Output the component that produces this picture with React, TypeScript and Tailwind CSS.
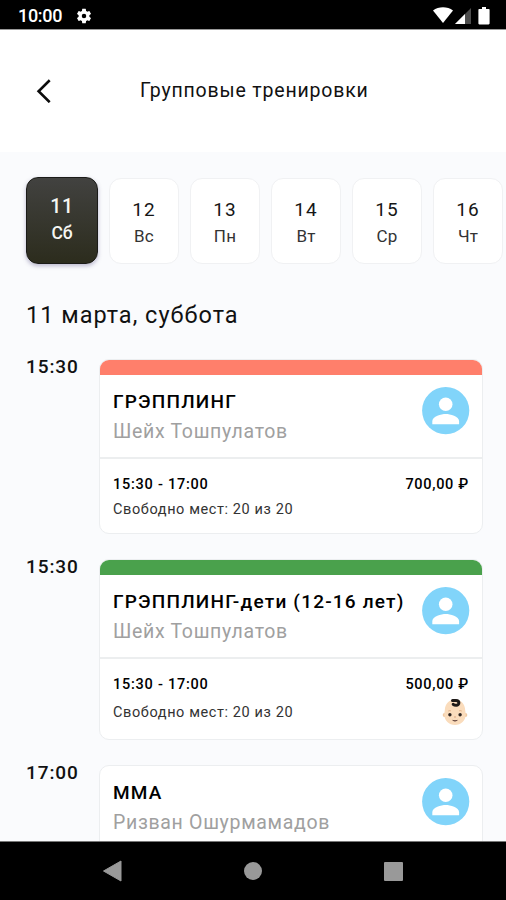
type Day = { date: number; name: string };

type Training = {
  start: string;
  title: string;
  coach: string;
  bar?: string;
  details?: { time: string; seats: string; price: string };
  kids?: boolean;
};

const days: Day[] = [
  { date: 12, name: "Вс" },
  { date: 13, name: "Пн" },
  { date: 14, name: "Вт" },
  { date: 15, name: "Ср" },
  { date: 16, name: "Чт" },
];

const trainings: Training[] = [
  {
    start: "15:30",
    title: "ГРЭППЛИНГ",
    coach: "Шейх Тошпулатов",
    bar: "bg-[#ff7f6b]",
    details: { time: "15:30 - 17:00", seats: "Свободно мест: 20 из 20", price: "700,00 ₽" },
  },
  {
    start: "15:30",
    title: "ГРЭППЛИНГ-дети (12-16 лет)",
    coach: "Шейх Тошпулатов",
    bar: "bg-[#4aa14c]",
    details: { time: "15:30 - 17:00", seats: "Свободно мест: 20 из 20", price: "500,00 ₽" },
    kids: true,
  },
  {
    start: "17:00",
    title: "ММА",
    coach: "Ризван Ошурмамадов",
  },
];

function StatusBar() {
  return (
    <div className="flex h-[29px] shrink-0 items-center bg-black pt-[3px] pr-[16px] pl-[18px] text-white">
      <span className="w-[57px] text-[18px] leading-none font-medium tracking-[-0.3px]">
        10:00
      </span>
      <svg className="size-[18px]" viewBox="0 0 24 24" fill="currentColor">
        <path d="M19.14 12.94c.04-.3.06-.61.06-.94 0-.32-.02-.64-.07-.94l2.03-1.58a.49.49 0 0 0 .12-.61l-1.92-3.32a.49.49 0 0 0-.59-.22l-2.39.96c-.5-.38-1.03-.7-1.62-.94l-.36-2.54a.48.48 0 0 0-.48-.41h-3.84c-.24 0-.43.17-.47.41l-.36 2.54c-.59.24-1.13.57-1.62.94l-2.39-.96a.48.48 0 0 0-.59.22L2.74 8.87c-.12.21-.08.47.12.61l2.03 1.58c-.05.3-.09.63-.09.94s.02.64.07.94l-2.03 1.58a.49.49 0 0 0-.12.61l1.92 3.32c.12.22.37.29.59.22l2.39-.96c.5.38 1.03.7 1.62.94l.36 2.54c.05.24.24.41.48.41h3.84c.24 0 .44-.17.47-.41l.36-2.54c.59-.24 1.13-.56 1.62-.94l2.39.96c.22.08.47 0 .59-.22l1.92-3.32a.48.48 0 0 0-.12-.61zM12 15a3 3 0 1 1 0-6 3 3 0 0 1 0 6z" />
      </svg>
      <div className="ml-auto flex items-center">
        <svg className="h-[18px] w-[20px]" viewBox="0 0 20 18" fill="currentColor">
          <path d="M0 3.400C2.900 1.500 6.300.3 10 .3s7.100 1.200 10 3.100L10 16z" />
        </svg>
        <svg className="ml-[2px] h-[18px] w-[16px]" viewBox="0 0 16 18">
          <path d="M16 1v16H0z" fill="#4d4d4d" />
          <path d="M10 7v10H0z" fill="currentColor" />
        </svg>
        <svg className="ml-[7px] h-[18px] w-[12px]" viewBox="0 0 12 18" fill="currentColor">
          <path d="M4 0h4v2h2.600c.7 0 1 .4 1 1v13.300c0 .7-.4 1.200-1 1.200H1.400c-.7 0-1-.5-1-1.200V3c0-.6.4-1 1-1H4z" />
        </svg>
      </div>
    </div>
  );
}

function Header() {
  return (
    <header className="flex h-[123px] shrink-0 items-center border-t border-[#999] bg-white pl-[36px]">
      <svg className="h-[24px] w-[15px]" viewBox="0 0 15 24" fill="none">
        <path d="M13.700 1.300L2.600 12.200l11.100 11" stroke="#0c0c0c" strokeWidth="2.600" />
      </svg>
      <h1 className="ml-[89px] text-[19.5px] leading-[24px] tracking-[0.82px] whitespace-nowrap text-[#111]">
        Групповые тренировки
      </h1>
    </header>
  );
}

function DayPicker() {
  return (
    <div className="flex items-center gap-[11px] pt-[25px] pl-[26px] leading-none">
      <div className="flex h-[87px] w-[72px] shrink-0 flex-col items-center rounded-[12px] border border-[#1b1b18] bg-linear-to-b from-[#424240] to-[#2c2c1d] pt-[19px] text-[#f6f6f2] shadow-[0_2px_4px_rgba(70,60,120,0.35)]">
        <span className="text-[19.5px] font-medium tracking-[0.6px]">11</span>
        <span className="mt-[8px] text-[17.5px] font-medium tracking-[-0.1px]">Сб</span>
      </div>
      {days.map((day) => (
        <div
          key={day.date}
          className="flex h-[86px] w-[70px] shrink-0 flex-col items-center rounded-[12px] border border-[#f0f1f3] bg-white pt-[21px] text-[#161616]"
        >
          <span className="text-[19px] tracking-[1px]">{day.date}</span>
          <span className="mt-[9px] text-[17px] tracking-[0.2px] text-[#333]">{day.name}</span>
        </div>
      ))}
    </div>
  );
}

function Avatar() {
  return (
    <svg className="size-[48px] shrink-0" viewBox="0 0 48 48">
      <circle cx="23.700" cy="23.600" r="23.600" fill="#81d4fa" />
      <circle cx="23.700" cy="17.200" r="6.800" fill="#fff" />
      <path d="M10.300 37.200v-3.200c0-4.600 9-7 13.400-7s13.400 2.400 13.400 7v3.200z" fill="#fff" />
    </svg>
  );
}

function BabyIcon() {
  return (
    <svg className="h-[28px] w-[26px]" viewBox="0 0 26 28">
      <circle cx="2.600" cy="17" r="1.900" fill="#f0c9a3" />
      <circle cx="23.400" cy="17" r="1.900" fill="#f0c9a3" />
      <path
        d="M13 1.500c6 0 9.800 4.300 10.200 10.500.1 1.500.5 2.600.5 4.600 0 6.200-4.700 10.400-10.700 10.400S2.300 22.800 2.300 16.600c0-2 .4-3.100.5-4.600C3.200 5.800 7 1.500 13 1.500z"
        fill="#fadcbc"
      />
      <path
        d="M10.500 2.500h3.500c3.800 0 3.800 4.800.2 4.800-1.300 0-2.200-.3-3-1"
        fill="none"
        stroke="#1d1917"
        strokeWidth="3"
        strokeLinecap="round"
      />
      <path d="M6.200 13.200c.8-.7 1.800-.8 2.700-.3M17.100 12.900c.9-.5 1.900-.4 2.700.3" fill="none" stroke="#d9a77c" strokeWidth=".8" />
      <circle cx="7.900" cy="16.700" r="1.700" fill="#2f2622" />
      <circle cx="18.100" cy="16.700" r="1.700" fill="#2f2622" />
      <path d="M12 19h2" stroke="#dba580" strokeWidth="1" />
      <path d="M10.300 21.700c1.700.7 3.700.7 5.400 0-.4 2.300-5 2.300-5.400 0z" fill="#4d2e2a" />
    </svg>
  );
}

function TrainingRow({ item }: { item: Training }) {
  return (
    <div className="flex items-start pl-[26px]">
      <div className="w-[73px] shrink-0 text-[19px] leading-[16px] font-medium tracking-[0.9px] text-[#111]">
        {item.start}
      </div>
      <div className="w-[384px] shrink-0 overflow-hidden rounded-[10px] border border-[#eceef0] bg-white">
        {item.bar && <div className={`h-[15px] ${item.bar}`} />}
        <div className="flex h-[84px] justify-between border-b-2 border-[#eceeef] pt-[12px] pr-[12px] pl-[13px]">
          <div className="whitespace-nowrap">
            <div className="pt-[3px] text-[19px] leading-[24px] font-medium tracking-[1.2px] text-black">
              {item.title}
            </div>
            <div className="mt-[6px] text-[19.5px] leading-[24px] tracking-[0.68px] text-[#a0a0a0]">
              {item.coach}
            </div>
          </div>
          <Avatar />
        </div>
        {item.details && (
          <div className={`flex justify-between pr-[13px] pl-[13px] ${item.kids ? "h-[80px]" : "h-[74px]"}`}>
            <div className="pt-[17px] whitespace-nowrap">
              <div className="text-[14.5px] leading-[18px] font-medium tracking-[0.75px] text-black">
                {item.details.time}
              </div>
              <div
                className={`text-[14.5px] leading-[18px] tracking-[0.6px] text-[#333] ${item.kids ? "mt-[10px]" : "mt-[7px]"}`}
              >
                {item.details.seats}
              </div>
            </div>
            <div className="flex flex-col items-end pt-[17px]">
              <div className="text-[14.5px] leading-[18px] font-medium tracking-[0.7px] text-black">
                {item.details.price}
              </div>
              {item.kids && (
                <div className="mt-[4px] mr-[1px]">
                  <BabyIcon />
                </div>
              )}
            </div>
          </div>
        )}
      </div>
    </div>
  );
}

function NavBar() {
  return (
    <nav className="flex h-[59px] shrink-0 items-center border-t border-[#777] bg-black pl-[102px]">
      <svg className="h-[22px] w-[20px]" viewBox="0 0 20 22">
        <path d="M19 1v20L1.500 11z" fill="#999" stroke="#999" strokeWidth="1" strokeLinejoin="round" />
      </svg>
      <div className="ml-[122px] size-[18px] rounded-full bg-[#999]" />
      <div className="ml-[122px] size-[19px] rounded-[1px] bg-[#999]" />
    </nav>
  );
}

export default function App() {
  return (
    <div className="flex h-[900px] w-[506px] flex-col overflow-hidden bg-[#fafbfd] font-['Roboto',sans-serif]">
      <StatusBar />
      <Header />
      <main className="min-h-0 flex-1 overflow-hidden">
        <DayPicker />
        <h2 className="mt-[37px] pl-[26px] text-[23.5px] leading-[28px] tracking-[1px] text-[#111]">
          11 марта, суббота
        </h2>
        <div className="mt-[30px] flex flex-col gap-[25px]">
          {trainings.map((item, i) => (
            <TrainingRow key={i} item={item} />
          ))}
        </div>
      </main>
      <NavBar />
    </div>
  );
}
